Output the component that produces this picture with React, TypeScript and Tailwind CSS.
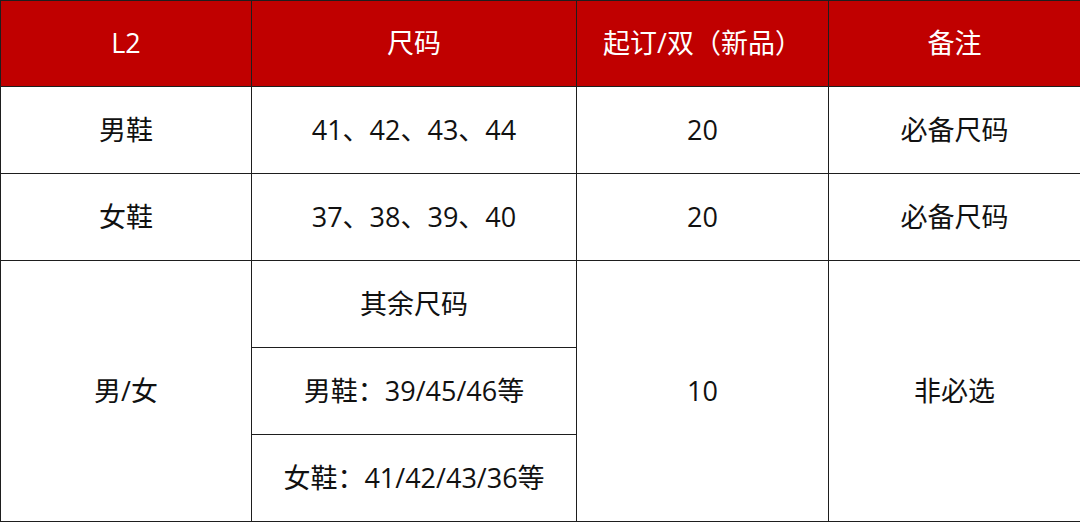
const font = { fontFamily: '"Open Sans", "Noto Sans CJK SC", sans-serif' };

function Cell({ children, head = false, className = "" }: { children: React.ReactNode; head?: boolean; className?: string }) {
  return (
    <div
      className={`flex items-center justify-center text-[27px] ${
        head ? "bg-[#c00000] text-white" : "bg-white text-[#111]"
      } ${className}`}
    >
      {children}
    </div>
  );
}

export default function App() {
  return (
    <div className="w-[1080px] h-[522px] bg-white" style={font}>
      <div className="grid grid-cols-[250px_324px_251px_251px] grid-rows-[85px_86px_86px_86px_86px_86px] gap-[1px] bg-[#1e1e1e] p-[1px] w-[1080px]">
        <Cell head>L2</Cell>
        <Cell head>尺码</Cell>
        <Cell head>起订/双（新品）</Cell>
        <Cell head>备注</Cell>

        <Cell>男鞋</Cell>
        <Cell>41、42、43、44</Cell>
        <Cell>20</Cell>
        <Cell>必备尺码</Cell>

        <Cell>女鞋</Cell>
        <Cell>37、38、39、40</Cell>
        <Cell>20</Cell>
        <Cell>必备尺码</Cell>

        <Cell className="row-span-3">男/女</Cell>
        <Cell>其余尺码</Cell>
        <Cell className="row-span-3">10</Cell>
        <Cell className="row-span-3">非必选</Cell>
        <Cell>男鞋：39/45/46等</Cell>
        <Cell>女鞋：41/42/43/36等</Cell>
      </div>
    </div>
  );
}
